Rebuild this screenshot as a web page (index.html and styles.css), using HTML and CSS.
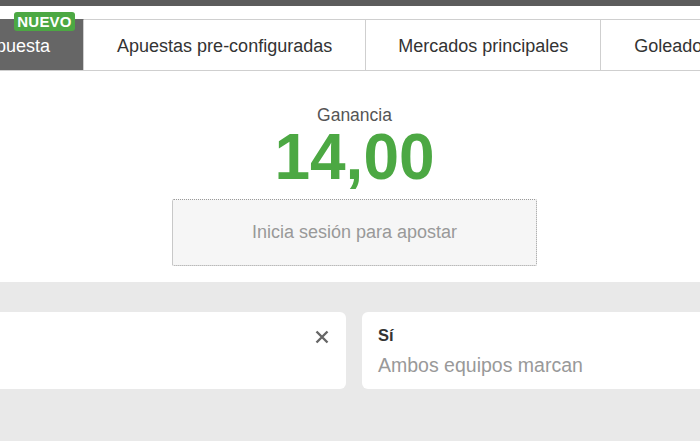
FILE: index.html
```html
<!DOCTYPE html>
<html lang="es">
<head>
<meta charset="utf-8">
<title>Apuesta</title>
<link rel="stylesheet" href="styles.css">
</head>
<body>
<div class="topbar"></div>
<nav class="tabs-wrap">
  <ul class="tabs">
    <li class="tab active"><span class="badge">NUEVO</span>Apuesta</li>
    <li class="tab">Apuestas pre-configuradas</li>
    <li class="tab">Mercados principales</li>
    <li class="tab">Goleadores</li>
  </ul>
</nav>
<section class="summary">
  <div class="label">Ganancia</div>
  <div class="amount">14,00</div>
  <div class="login">Inicia sesión para apostar</div>
</section>
<section class="selections">
  <div class="cards">
    <div class="card first">
      <span class="close">
        <svg width="14" height="14" viewBox="0 0 14 14"><path d="M1.5 1.5 L12.5 12.5 M12.5 1.5 L1.5 12.5" stroke="#666" stroke-width="2.4" stroke-linecap="butt" fill="none"/></svg>
      </span>
    </div>
    <div class="card">
      <div class="pick">Sí</div>
      <div class="market">Ambos equipos marcan</div>
    </div>
  </div>
</section>
</body>
</html>
```
FILE: styles.css
```css
* { box-sizing: border-box; }
html, body { margin: 0; padding: 0; }
body {
  width: 700px;
  height: 441px;
  overflow: hidden;
  background: #fff;
  font-family: "Liberation Sans", Arial, Helvetica, sans-serif;
  color: #333;
}
.topbar {
  height: 6px;
  background: #5c5c5c;
}
.tabs-wrap {
  padding-top: 13px;
  overflow: hidden;
}
.tabs {
  list-style: none;
  margin: 0 0 0 -49px;
  padding: 0;
  display: flex;
  white-space: nowrap;
  border-bottom: 1px solid #cfcfcf;
  width: max-content;
}
.tab {
  position: relative;
  flex: none;
  height: 51px;
  line-height: 52px;
  padding: 0 33px;
  font-size: 18px;
  color: #333;
  border-top: 1px solid #cfcfcf;
  border-right: 1px solid #cfcfcf;
  background: #fff;
}
.tab:nth-child(3) { padding: 0 32px; }
.tab.active {
  background: #666;
  color: #fff;
  border-top-color: #666;
  border-right-color: #cfcfcf;
}
.badge {
  position: absolute;
  top: -8px;
  left: 63px;
  width: 61px;
  height: 19px;
  line-height: 19px;
  text-align: center;
  background: #4ca843;
  color: #fff;
  font-size: 15px;
  font-weight: bold;
  letter-spacing: 0.2px;
  border-radius: 3px;
}
.summary {
  display: flex;
  flex-direction: column;
  align-items: center;
  padding-top: 34px;
  padding-left: 9px;
  height: 211px;
}
.label {
  font-size: 17.5px;
  line-height: 20px;
  color: #555;
}
.amount {
  font-size: 64px;
  line-height: 64px;
  font-weight: bold;
  color: #4ca843;
}
.login {
  margin-top: 10px;
  width: 365px;
  height: 67px;
  border: 1px dotted #9a9a9a;
  border-radius: 2px;
  background: #f6f6f6;
  display: flex;
  align-items: center;
  justify-content: center;
  font-size: 18px;
  color: #999;
}
.selections {
  background: #e9e9e9;
  height: 160px;
  padding-top: 30px;
  overflow: hidden;
}
.cards {
  display: flex;
  gap: 16px;
  margin-left: -40px;
}
.card {
  position: relative;
  flex: none;
  width: 386px;
  height: 77px;
  background: #fff;
  border-radius: 6px;
  padding: 13px 16px;
}
.card.first {
  display: flex;
  justify-content: flex-end;
  padding: 18px 17px;
}
.close {
  display: block;
  width: 14px;
  height: 14px;
}
.close svg { display: block; }
.pick {
  font-size: 16.5px;
  font-weight: bold;
  color: #333;
  line-height: 20px;
}
.market {
  margin-top: 9px;
  font-size: 19.5px;
  color: #999;
  line-height: 22px;
}
```
